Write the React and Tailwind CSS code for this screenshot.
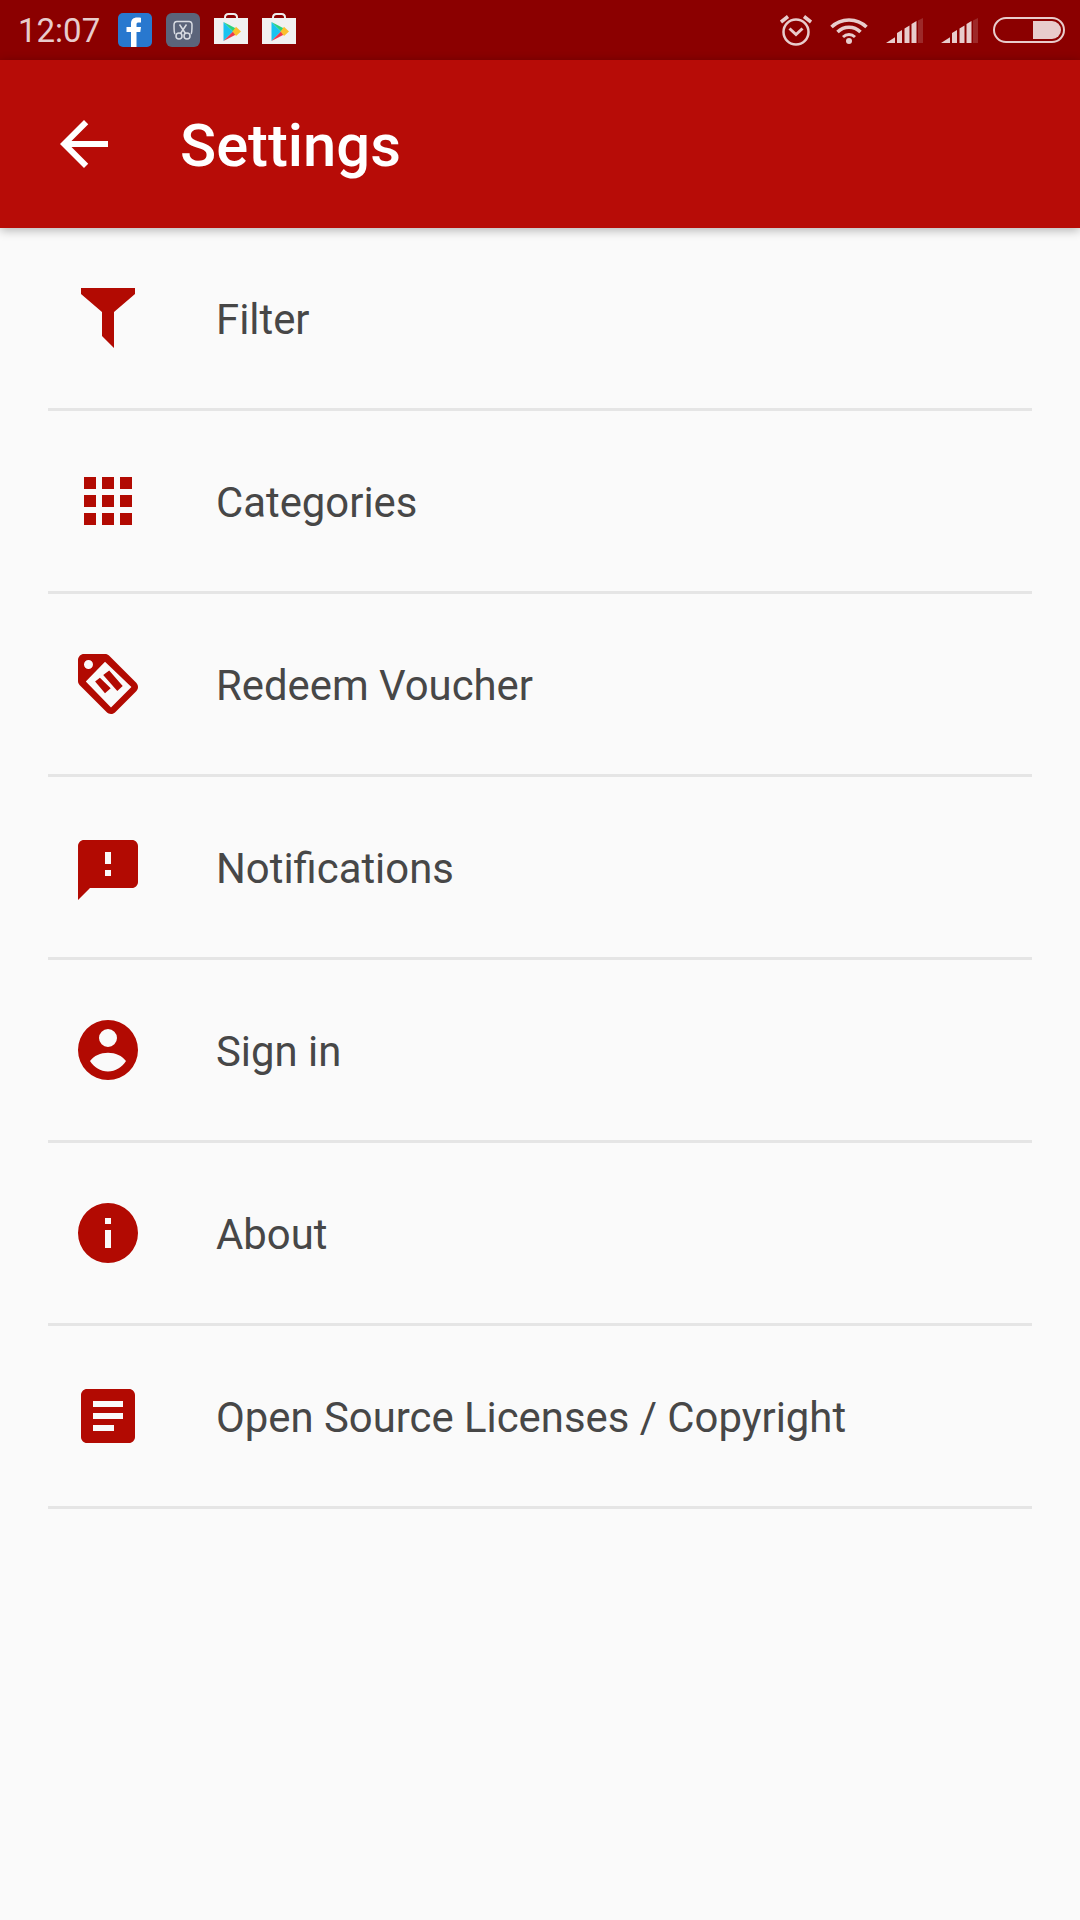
import React from "react";

const RED = "#b20a02";
const rows = [
  ["Filter", <path d="M3 2H21V4L14 10V22L10 18V10L3 4Z" />],
  ["Categories", <path d="M4 4h4v4H4zM10 4h4v4h-4zM16 4h4v4h-4zM4 10h4v4H4zM10 10h4v4h-4zM16 10h4v4h-4zM4 16h4v4H4zM10 16h4v4h-4zM16 16h4v4h-4z" />],
  ["Redeem Voucher", <path fillRule="evenodd" d="M21.41 11.58l-9-9C12.05 2.22 11.55 2 11 2H4c-1.1 0-2 .9-2 2v7c0 .55.22 1.05.59 1.42l9 9c.36.36.86.58 1.41.58s1.05-.22 1.41-.59l7-7c.37-.36.59-.86.59-1.41s-.23-1.06-.59-1.42zM5.5 7A1.5 1.5 0 1 1 5.5 4a1.5 1.5 0 0 1 0 3zM11 4.6L19.8 13 13 19.8 4.6 11.2zM12.4 7.5L10.4 9 15.1 14.3 16.9 12.7zM9.3 9.9L7.7 11.2 11 15.1 12.9 13.4z" />],
  ["Notifications", <path fillRule="evenodd" d="M20 3H4C2.9 3 2.01 3.9 2.01 5L2 23l4-4h14c1.1 0 2-.9 2-2V5c0-1.1-.9-2-2-2zM13 15h-2v-2h2v2zM13 11h-2V7h2v4z" />],
  ["Sign in", <path fillRule="evenodd" d="M12 2a10 10 0 1 0 0 20a10 10 0 0 0 0-20zM12 5a3 3 0 1 1 0 6a3 3 0 0 1 0-6zM6 15.7C7.3 13.9 9.5 12.9 12 12.9s4.7 1 6 2.8c-1.3 2-3.5 3.5-6 3.5s-4.7-1.5-6-3.5z" />],
  ["About", <path fillRule="evenodd" d="M12 2a10 10 0 1 0 0 20a10 10 0 0 0 0-20zM13 17h-2v-6h2v6zM13 9h-2V7h2v2z" />],
  ["Open Source Licenses / Copyright", <path fillRule="evenodd" d="M19 3H5c-1.1 0-2 .9-2 2v14c0 1.1.9 2 2 2h14c1.1 0 2-.9 2-2V5c0-1.1-.9-2-2-2zM14 17H7v-2h7v2zM17 13H7v-2h10v2zM17 9H7V7h10v2z" />],
];

function PlayBag({ className }) {
  return (
    <svg className={className} width="34" height="32" viewBox="0 0 34 32">
      <path d="M11 6V4.500C11 2.500 12.500 1 14.500 1h5C21.500 1 23 2.500 23 4.500V6" fill="none" stroke="#eeeeee" strokeWidth="2" />
      <rect x="0" y="5" width="34" height="26" fill="#f1f1f1" />
      <path d="M9.500 9L19 18.500 9.500 28z" fill="#19c3f0" />
      <path d="M9.500 9L23 16 19.500 19z" fill="#2bd27d" />
      <path d="M9.500 28L23 21 19.500 18z" fill="#ee3a4d" />
      <path d="M22 13.800L27 18.500 22 23 18.500 18.500z" fill="#fbc02d" />
    </svg>
  );
}

function Signal({ className }) {
  return (
    <svg className={className} width="37" height="25" viewBox="0 0 37 25">
      <path d="M0 25L9 19.300V25z" fill="#e8cccc" />
      <path d="M11 25V15L16 12V25zM18.500 25V10.500L23.500 7.500V25zM25.500 25V6L30.500 3V25z" fill="#e8cccc" />
      <path d="M32 25V2.500L37 0V25z" fill="#e8cccc" fillOpacity="0.2" />
    </svg>
  );
}

export default function App() {
  return (
    <div className="flex flex-col w-[1080px] h-[1920px] bg-[#fafafa] overflow-hidden" style={{ fontFamily: "Roboto, sans-serif" }}>
      <div className="flex items-center shrink-0 h-[60px] bg-[#8b0000] text-[#e8cccc]">
        <span className="ml-[18px] w-[100px] text-[33px] leading-none">12:07</span>
        <svg className="block" width="34" height="34" viewBox="0 0 34 34">
          <rect width="34" height="34" rx="5" fill="#2878cf" />
          <path d="M13 34V19H8.500V14H13V10.500C13 6.500 15.500 4.500 19 4.500c1.800 0 3.500.2 4 .3V9.500h-2.800C18.500 9.500 18.500 10.800 18.500 12V14H23L22.300 19H18.500V34z" fill="#fff" />
        </svg>
        <svg className="block ml-[14px]" width="34" height="34" viewBox="0 0 34 34">
          <rect width="34" height="34" rx="6" fill="#5b647a" />
          <g fill="none" stroke="#d9dce3" strokeWidth="1.500">
            <path d="M9 21C8 20 8 18 8 12C8 9.500 9 8.500 11 8.500H23C25 8.500 26 9.500 26 12C26 18 26 20 25 21" />
            <circle cx="13" cy="23" r="3" />
            <circle cx="21" cy="23" r="3" />
            <path d="M14.500 20.500L20.500 11.500M19.500 20.500L13.500 11.500" />
          </g>
        </svg>
        <PlayBag className="block ml-[14px] mb-[3px]" />
        <PlayBag className="block ml-[14px] mb-[3px]" />

        <svg className="block ml-auto" width="32" height="32" viewBox="0 0 32 32" fill="none" stroke="#e8cccc" strokeWidth="2.500">
          <circle cx="16" cy="18" r="12.500" />
          <path d="M9.500 14.500L16 20.500 22.500 14.500" strokeWidth="3" />
          <path d="M1 8L8 2.500M31 8L24 2.500" strokeWidth="3.500" />
        </svg>
        <svg className="block ml-[18px]" width="38" height="28" viewBox="0 0 38 28" fill="none" stroke="#e8cccc" strokeWidth="3.500">
          <path d="M1.500 11C11 1.500 27 1.500 36.500 11" />
          <path d="M7.500 16C14 9.500 24 9.500 30.500 16" />
          <path d="M13 21C16.500 17.800 21.500 17.800 25 21" strokeWidth="3" />
          <circle cx="19" cy="25" r="3" fill="#e8cccc" stroke="none" />
        </svg>
        <Signal className="block ml-[18px]" />
        <Signal className="block ml-[18px]" />
        <div className="flex justify-end items-stretch ml-[15px] mr-[15px] w-[72px] h-[26px] rounded-[13px] border-2 border-[#e8cccc] p-[2px]">
          <div className="w-[28px] bg-[#e8cccc] rounded-r-[9px]" />
        </div>
      </div>

      <div className="relative z-10 flex items-center shrink-0 h-[168px] bg-[#b70c07] shadow-[0_2px_10px_rgba(0,0,0,0.3)]">
        <svg className="block ml-[48px]" width="72" height="72" viewBox="0 0 24 24" fill="#ffffff">
          <path d="M20 11H7.830l5.590-5.590L12 4l-8 8 8 8 1.410-1.410L7.830 13H20v-2z" />
        </svg>
        <span className="ml-[60px] pt-[5px] text-[59.7px] font-medium leading-none text-white">Settings</span>
      </div>

      <div className="flex flex-col">
        {rows.map(([label, icon]) => (
          <div key={label} className="flex items-center mx-[48px] h-[183px] border-b-[3px] border-[#e5e5e5]">
            <svg className="block ml-[24px] shrink-0" width="72" height="72" viewBox="0 0 24 24" fill={RED}>
              {icon}
            </svg>
            <span className="ml-[72px] pt-[3px] text-[41.85px] leading-none text-[#474747]">{label}</span>
          </div>
        ))}
      </div>
    </div>
  );
}
